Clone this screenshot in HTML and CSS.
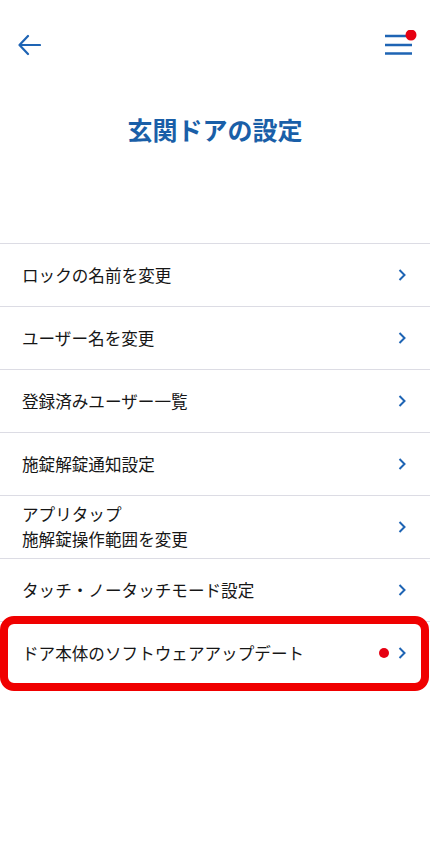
FILE: index.html
```html
<!DOCTYPE html>
<html lang="ja">
<head>
    <meta charset="UTF-8">
    <meta name="viewport" content="width=device-width, initial-scale=1.0">
    <title>玄関ドアの設定</title>
    <link rel="stylesheet" href="styles.css">
</head>
<body>
    <div class="header">
        <svg class="back-icon" width="24" height="24" viewBox="0 0 24 24">
            <path d="M11 3 L2.5 12 L11 21 M2.5 12 H23" fill="none" stroke="#1e64b4" stroke-width="2.2" stroke-linecap="round" stroke-linejoin="round"/>
        </svg>
        <svg class="menu-icon" width="36" height="30" viewBox="0 0 36 30">
            <path d="M3 6 H30 M3 15 H30 M3 23.5 H30" stroke="#1e64b4" stroke-width="2.4"/>
            <circle cx="29" cy="5" r="5.5" fill="#e60012"/>
        </svg>
    </div>

    <h1 class="page-title">玄関ドアの設定</h1>

    <div class="settings-list">
        <div class="settings-row">
            <span class="row-label">ロックの名前を変更</span>
            <svg class="chevron" width="8" height="12" viewBox="0 0 8 12"><path d="M1.5 1 L6.5 6 L1.5 11" fill="none" stroke="#1e64b4" stroke-width="2"/></svg>
        </div>
        <div class="settings-row">
            <span class="row-label">ユーザー名を変更</span>
            <svg class="chevron" width="8" height="12" viewBox="0 0 8 12"><path d="M1.5 1 L6.5 6 L1.5 11" fill="none" stroke="#1e64b4" stroke-width="2"/></svg>
        </div>
        <div class="settings-row">
            <span class="row-label">登録済みユーザー一覧</span>
            <svg class="chevron" width="8" height="12" viewBox="0 0 8 12"><path d="M1.5 1 L6.5 6 L1.5 11" fill="none" stroke="#1e64b4" stroke-width="2"/></svg>
        </div>
        <div class="settings-row">
            <span class="row-label">施錠解錠通知設定</span>
            <svg class="chevron" width="8" height="12" viewBox="0 0 8 12"><path d="M1.5 1 L6.5 6 L1.5 11" fill="none" stroke="#1e64b4" stroke-width="2"/></svg>
        </div>
        <div class="settings-row">
            <span class="row-label">アプリタップ<br>施解錠操作範囲を変更</span>
            <svg class="chevron" width="8" height="12" viewBox="0 0 8 12"><path d="M1.5 1 L6.5 6 L1.5 11" fill="none" stroke="#1e64b4" stroke-width="2"/></svg>
        </div>
        <div class="settings-row">
            <span class="row-label">タッチ・ノータッチモード設定</span>
            <svg class="chevron" width="8" height="12" viewBox="0 0 8 12"><path d="M1.5 1 L6.5 6 L1.5 11" fill="none" stroke="#1e64b4" stroke-width="2"/></svg>
        </div>
        <div class="settings-row highlighted">
            <span class="row-label">ドア本体のソフトウェアアップデート</span>
            <span class="row-end">
                <span class="badge-dot"></span>
                <svg class="chevron" width="8" height="12" viewBox="0 0 8 12"><path d="M1.5 1 L6.5 6 L1.5 11" fill="none" stroke="#1e64b4" stroke-width="2"/></svg>
            </span>
            <span class="highlight-frame"></span>
        </div>
    </div>
</body>
</html>
```

FILE: styles.css
```css
body {
    margin: 0;
    padding: 0 0 60px 0;
    background-color: #fff;
    font-family: "Noto Sans CJK JP", "Noto Sans", sans-serif;
    color: #161616;
}

.header {
    height: 90px;
    display: flex;
    justify-content: space-between;
    align-items: center;
    padding: 0 12px 0 17px;
}

.back-icon,
.menu-icon {
    display: block;
}

.page-title {
    margin: 22px 0 0 0;
    font-size: 25px;
    line-height: 34px;
    font-weight: bold;
    text-align: center;
    color: #1a5fa8;
}

.settings-list {
    margin-top: 97px;
}

.settings-row {
    position: relative;
    height: 62px;
    border-top: 1px solid #dcdce4;
    display: flex;
    align-items: center;
    justify-content: space-between;
    padding: 0 24px 0 22px;
}

.row-label {
    font-size: 16.6px;
    line-height: 25px;
}

.row-end {
    display: flex;
    align-items: center;
    gap: 9px;
}

.badge-dot {
    width: 10px;
    height: 10px;
    border-radius: 50%;
    background-color: #e60012;
}

.chevron {
    display: block;
}

/* red frame drawn over the update row */
.highlight-frame {
    position: absolute;
    top: -6px;
    bottom: -7px;
    left: 0;
    right: 1px;
    border: 8px solid #f00000;
    border-radius: 14px;
}
```
